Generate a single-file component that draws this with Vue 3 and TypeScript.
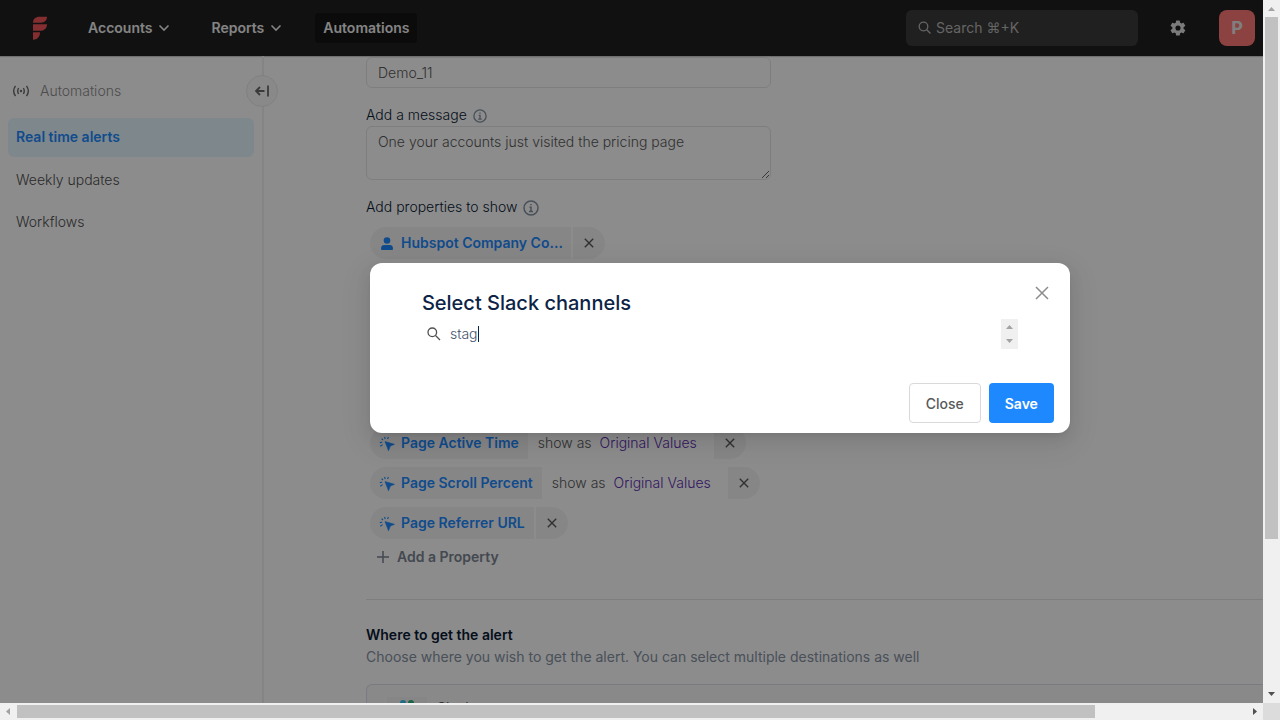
<script setup lang="ts">
import { ref } from 'vue'

interface Property {
  name: string
  format?: string
}

const accountProperties: Property[] = [{ name: 'Hubspot Company Co...' }]
const pageProperties: Property[] = [
  { name: 'Page Active Time', format: 'Original Values' },
  { name: 'Page Scroll Percent', format: 'Original Values' },
  { name: 'Page Referrer URL' },
]
const alertName = ref('Demo_11')
const message = ref('One your accounts just visited the pricing page')
const channel = ref('stag')
</script>

<template>
  <div class="window">
    <div class="page">
      <header class="topbar">
        <a class="logo" href="#" aria-label="Home">
          <svg width="14" height="24" viewBox="0 0 14 24" fill="#f0555a">
            <path d="M0 6.700C0 3 2.500 0.800 6.500 0.800H14C14 4.500 11.500 6.700 8 6.700Z" />
            <path d="M0 8.300H14C14 12 11.500 14.700 8 14.700H0Z" />
            <path d="M0 16.300H7C7 20.500 4.500 23.800 0 23.800Z" />
          </svg>
        </a>
        <nav class="menu">
          <button class="menu-item" type="button">
            Accounts
            <svg width="12" height="8" viewBox="0 0 12 8"><path d="M1.500 1.500 6 6l4.500-4.500" /></svg>
          </button>
          <button class="menu-item" type="button">
            Reports
            <svg width="12" height="8" viewBox="0 0 12 8"><path d="M1.500 1.500 6 6l4.500-4.500" /></svg>
          </button>
          <button class="menu-item active" type="button">Automations</button>
        </nav>
        <button class="search" type="button">
          <svg width="14" height="14" viewBox="0 0 14 14"><circle cx="5.500" cy="5.500" r="4.300" /><path d="m8.700 8.700 3.800 3.800" /></svg>
          <span>Search <span class="key">⌘</span>+K</span>
        </button>
        <button class="gear" type="button" aria-label="Settings">
          <svg width="18" height="18" viewBox="0 0 24 24" fill="#e0e0e0">
            <path d="M19.400 13a7.500 7.500 0 0 0 0-2l2.100-1.600a.5.5 0 0 0 .1-.6l-2-3.500a.5.5 0 0 0-.6-.2l-2.500 1a7.300 7.300 0 0 0-1.700-1l-.4-2.600a.5.5 0 0 0-.5-.4h-4a.5.5 0 0 0-.5.400L9 5.100a7.700 7.700 0 0 0-1.700 1l-2.500-1a.5.5 0 0 0-.6.2l-2 3.500a.5.5 0 0 0 .1.6L4.500 11a8 8 0 0 0 0 2l-2.200 1.600a.5.5 0 0 0-.1.6l2 3.500c.1.2.400.300.600.200l2.500-1a7.300 7.300 0 0 0 1.700 1l.4 2.600c0 .3.200.400.500.400h4c.3 0 .5-.2.500-.400l.4-2.600a7.700 7.700 0 0 0 1.700-1l2.500 1c.2.100.5 0 .6-.2l2-3.500a.5.5 0 0 0-.1-.6ZM12 15.400a3.400 3.400 0 1 1 0-6.800 3.400 3.400 0 0 1 0 6.800Z" />
          </svg>
        </button>
        <button class="avatar" type="button">P</button>
      </header>

      <div class="body">
        <aside class="sidebar">
          <div class="side-head">
            <svg width="18" height="14" viewBox="0 0 18 14">
              <path d="M3.500 1.800a9 9 0 0 0 0 10.400M6.600 4a6 6 0 0 0 0 6M14.500 1.800a9 9 0 0 1 0 10.400M11.400 4a6 6 0 0 1 0 6" />
              <circle cx="9" cy="7" r=".5" />
            </svg>
            <span>Automations</span>
            <button class="collapse" type="button" aria-label="Collapse sidebar">
              <svg width="16" height="14" viewBox="0 0 16 14"><path d="M10.500 7H2M6 3 2 7l4 4M14 1.500v11" /></svg>
            </button>
          </div>
          <a class="side-link current" href="#">Real time alerts</a>
          <a class="side-link" href="#">Weekly updates</a>
          <a class="side-link" href="#">Workflows</a>
        </aside>

        <main class="content">
          <input v-model="alertName" class="field name" type="text" aria-label="Alert name">
          <div class="label-row">
            <label for="message">Add a message</label>
            <svg width="14" height="14" viewBox="0 0 16 16"><circle cx="8" cy="8" r="7" /><path d="M6.500 7.200H8v4.300M6 11.500h4M8 4v1.300" /></svg>
          </div>
          <textarea id="message" v-model="message" class="field message"></textarea>
          <div class="label-row properties">
            <span>Add properties to show</span>
            <svg width="16" height="16" viewBox="0 0 16 16"><circle cx="8" cy="8" r="7" /><path d="M6.500 7.200H8v4.300M6 11.500h4M8 4v1.300" /></svg>
          </div>

          <div class="chips">
            <div v-for="item in accountProperties" :key="item.name" class="chip-row">
              <button class="chip" type="button">
                <svg width="12" height="16" viewBox="0 0 12 16" fill="#1e89ff"><circle cx="6" cy="5.500" r="3.300" /><path d="M0 13.800C0 11 1.500 10 3 10h6c1.500 0 3 1 3 3.800 0 .8-.4 1.200-1.200 1.200H1.200C.4 15 0 14.600 0 13.800Z" /></svg>
                {{ item.name }}
              </button>
              <button class="remove" type="button" aria-label="Remove"><svg width="10" height="10" viewBox="0 0 10 10"><path d="m.8.8 8.400 8.400M9.200.8.8 9.200" /></svg></button>
            </div>
          </div>

          <div class="chips lower">
            <div v-for="item in pageProperties" :key="item.name" class="chip-row">
              <button class="chip page-chip" type="button">
                <svg width="16" height="16" viewBox="0 0 16 16"><path d="M6 6.500 15.500 9.300 11.400 11 9.500 15.800Z" fill="#1e89ff" stroke="#1e89ff" stroke-width=".6" /><path d="M5.600 1.800 6.200 4M2.600 3.600 4 5M.8 7.600 3.200 7.200M1.200 11.200 3.600 9.600M9.400 2 8.600 4" stroke="#1e89ff" stroke-width="1.100" fill="none" /></svg>
                {{ item.name }}
              </button>
              <span v-if="item.format" class="format">show as <a href="#">{{ item.format }}</a></span>
              <button class="remove" type="button" aria-label="Remove"><svg width="10" height="10" viewBox="0 0 10 10"><path d="m.8.8 8.400 8.400M9.200.8.8 9.200" /></svg></button>
            </div>
          </div>
          <button class="add" type="button">
            <svg width="12" height="12" viewBox="0 0 12 12"><path d="M6 0v12M0 6h12" /></svg>
            Add a Property
          </button>

          <section class="destinations">
            <h2>Where to get the alert</h2>
            <p>Choose where you wish to get the alert. You can select multiple destinations as well</p>
            <div class="card">
              <span class="tile">
                <svg width="24" height="24" viewBox="0 0 24 24"><circle cx="8" cy="3" r="3" fill="#36c5f0" /><rect x="0" y="8" width="11" height="5" rx="2.500" fill="#36c5f0" /><rect x="13" y="0" width="6" height="12" rx="3" fill="#2eb67d" /></svg>
              </span>
              <span>Slack</span>
            </div>
          </section>
        </main>
      </div>

      <div class="overlay">
        <div class="stage">
          <section class="modal" role="dialog" aria-modal="true" aria-labelledby="modal-title">
            <button class="dismiss" type="button" aria-label="Dismiss">
              <svg width="14" height="14" viewBox="0 0 14 14"><path d="m1 1 12 12M13 1 1 13" /></svg>
            </button>
            <h1 id="modal-title">Select Slack channels</h1>
            <div class="channel-row">
              <svg width="14" height="14" viewBox="0 0 14 14"><circle cx="5.300" cy="5.300" r="4.300" /><path d="m8.500 8.500 4.500 4.500" /></svg>
              <div class="channel">
                <span class="typed" aria-hidden="true">{{ channel }}</span>
                <input v-model="channel" type="text" aria-label="Search channels">
              </div>
              <div class="mini-scroll">
                <svg width="17" height="30" viewBox="0 0 17 30" fill="#a3a3a3"><path d="M5 10 8.500 6 12 10ZM5 20l3.500 4L12 20Z" /></svg>
              </div>
            </div>
            <footer>
              <button class="close" type="button">Close</button>
              <button class="save" type="button">Save</button>
            </footer>
          </section>
        </div>
      </div>
    </div>

    <div class="bar vertical">
      <svg width="17" height="17" viewBox="0 0 17 17" fill="#a3a3a3"><path d="M5 11 8.500 7 12 11Z" /></svg>
      <div class="track"><i class="thumb"></i></div>
      <svg width="17" height="17" viewBox="0 0 17 17" fill="#505050"><path d="M5 6 8.500 10 12 6Z" /></svg>
    </div>
    <div class="bar horizontal">
      <svg width="17" height="17" viewBox="0 0 17 17" fill="#a3a3a3"><path d="M10 5 6 8.500 10 12Z" /></svg>
      <div class="track"><i class="thumb"></i></div>
      <svg width="17" height="17" viewBox="0 0 17 17" fill="#505050"><path d="M7 5 11 8.500 7 12Z" /></svg>
    </div>
    <div class="corner"></div>
  </div>
</template>

<style>
body { margin: 0; overflow: hidden; }
</style>

<style scoped>
* { box-sizing: border-box; }
button { font: inherit; border: 0; padding: 0; background: none; color: inherit; cursor: pointer; }
a { color: inherit; text-decoration: none; }
svg { flex: none; display: block; }

.window {
  display: grid;
  grid-template: minmax(0, 1fr) 17px / minmax(0, 1fr) 17px;
  height: 100vh;
  font: 14px/20px Inter, "Noto Sans", sans-serif;
  color: #0a1a33;
}
.page { position: relative; display: flex; flex-direction: column; overflow: hidden; background: #fff; }

.topbar {
  flex: none;
  display: flex;
  align-items: center;
  height: 56px;
  padding: 0 8px 0 33px;
  background: #1f1f1f;
  box-shadow: 0 1px 1px rgba(0, 0, 0, .2);
  color: #fff;
  font-weight: 600;
}
.menu { display: flex; align-items: center; gap: 25px; margin-left: 33px; }
.menu-item { display: flex; align-items: center; gap: 6px; height: 30px; padding: 0 8px; border-radius: 4px; color: #f0f0f0; }
.menu-item svg { fill: none; stroke: #f0f0f0; stroke-width: 1.600; }
.menu-item.active { background: #141414; }
.search {
  display: flex; align-items: center; gap: 4px;
  width: 232px; height: 36px; margin-left: auto; padding: 0 12px;
  border-radius: 6px; background: #3b3b3b; color: #b8b8b8; font-weight: 400;
}
.search svg { fill: none; stroke: #b8b8b8; stroke-width: 1.3; }
.key { font-family: "DejaVu Sans", sans-serif; }
.gear { margin: 0 32px 0 31px; }
.avatar { width: 36px; height: 36px; border-radius: 8px; background: #ff7875; color: #e8e8e8; font-size: 18px; font-weight: 700; }

.body { flex: 1; display: flex; min-height: 0; }
.sidebar { flex: none; width: 264px; padding: 19px 8px 0; border-right: 2px solid #f0f0f0; }
.side-head { display: flex; align-items: center; gap: 10px; height: 32px; margin: 0 -24px 11px 4px; color: #8c8c8c; font-weight: 300; }
.side-head > svg { fill: none; stroke: #6a6a6a; stroke-width: 1.400; }
.collapse { position: relative; display: grid; place-items: center; width: 32px; height: 32px; margin-left: auto; border: 1px solid #ebebeb; border-radius: 50%; background: #fafafa; }
.collapse svg { fill: none; stroke: #6a6a6a; stroke-width: 1.800; }
.side-link { display: flex; align-items: center; height: 39px; margin-bottom: 3px; padding: 0 8px 1px; border-radius: 6px; color: #4f4f4f; font-weight: 300; }
.side-link.current { margin-bottom: 4px; background: #e6f7ff; color: #1e89ff; font-weight: 600; }

.content { flex: 1; min-width: 0; padding: 1px 0 0 102px; }
.field { display: block; width: 405px; padding: 0 11px; border: 1px solid #e6e6e6; border-radius: 6px; outline: 0; background: #fff; color: #595959; font: inherit; font-weight: 300; }
.name { height: 31px; padding-bottom: 1px; }
.label-row { display: flex; align-items: center; gap: 6px; height: 20px; margin: 17px 0 1px; font-weight: 300; }
.label-row svg { margin-top: 2px; fill: none; stroke: #8692a3; stroke-width: 1.500; }
.message { height: 54px; padding-top: 5px; resize: both; }
.chips { display: grid; gap: 8px; padding: 9px 0 0 4px; }
.chips.lower { padding-top: 168px; }
.chip-row { display: flex; gap: 2px; height: 32px; }
.chip { display: flex; align-items: center; gap: 8px; padding: 0 8px 0 11px; border-radius: 16px 0 0 16px; background: #f5f5f5; color: #1e89ff; font-weight: 600; white-space: nowrap; }
.page-chip { gap: 6px; padding: 0 9px; }
.remove { display: grid; place-items: center; width: 32px; border-radius: 0 16px 16px 0; background: #f5f5f5; }
.remove svg { fill: none; stroke: #595959; stroke-width: 1.400; }
.format { display: flex; align-items: center; gap: 8px; padding: 0 15px 0 8px; color: #595959; font-weight: 300; }
.format a { color: #5c2eb0; }
.add { display: flex; align-items: center; gap: 8px; height: 20px; margin: 8px 0 0 11px; color: #7c8593; font-weight: 600; }
.add svg { fill: none; stroke: #7c8593; stroke-width: 1.500; }

.destinations { margin-top: 32px; padding-top: 25px; border-top: 1px solid #e3e5ea; }
.destinations h2 { margin: 0; font-size: 14px; line-height: 20px; font-weight: 600; }
.destinations p { margin: 2px 0 17px; color: #8692a3; font-weight: 400; }
.card { display: flex; align-items: flex-start; gap: 10px; height: 120px; padding: 12px 20px; border: 1px solid #dde1ea; border-right: 0; border-radius: 6px 0 0; background: #fafafa; color: #595959; }
.card > span:last-child { margin-top: 1px; }
.tile { display: grid; place-items: start center; width: 40px; height: 40px; padding-top: 3px; background: #f5f5f5; }

.overlay { position: absolute; inset: 0; overflow: hidden; background: rgba(0, 0, 0, .45); }
.stage { display: grid; place-items: center; width: 114%; height: calc(100% - 7px); }
.modal {
  position: relative;
  width: 700px;
  padding: 26px 16px 10px 52px;
  border-radius: 12px;
  background: #fff;
  box-shadow: 0 9px 28px 8px rgba(0, 0, 0, .05), 0 6px 16px rgba(0, 0, 0, .08), 0 3px 6px -4px rgba(0, 0, 0, .12);
}
.modal h1 { margin: 0; color: #0c2345; font-size: 20px; line-height: 28px; font-weight: 500; }
.dismiss { position: absolute; top: 23px; right: 21px; }
.dismiss svg { fill: none; stroke: #8c8c8c; stroke-width: 1.500; }
.channel-row { display: flex; align-items: center; gap: 9px; height: 30px; margin-top: 2px; padding: 0 36px 0 5px; }
.channel-row > svg { fill: none; stroke: #505050; stroke-width: 1.300; }
.channel { position: relative; flex: 1; }
.channel input { display: block; width: 100%; height: 20px; padding: 0; border: 0; outline: 0; background: none; color: #3e516c; font: inherit; font-weight: 300; }
.typed { position: absolute; top: 2px; left: 0; height: 16px; border-right: 1px solid #0c2345; color: transparent; font-weight: 300; pointer-events: none; }
.mini-scroll { background: #f0f0f0; }
.modal footer { display: flex; justify-content: flex-end; gap: 8px; margin-top: 34px; }
.close, .save { height: 40px; padding: 2px 16px 0; border-radius: 4px; }
.close { border: 1px solid #d9d9d9; color: #595959; font-weight: 500; }
.save { background: #1e89ff; color: #fff; font-weight: 600; }

.bar { display: flex; background: #f0f0f0; }
.vertical { flex-direction: column; }
.track { flex: 1; }
.thumb { display: block; background: #c1c1c1; }
.vertical .thumb { width: 13px; height: 78%; margin: 0 auto; }
.horizontal .track { display: flex; align-items: center; }
.horizontal .thumb { width: 87.7%; height: 13px; }
.corner { background: #dcdcdc; }
</style>
